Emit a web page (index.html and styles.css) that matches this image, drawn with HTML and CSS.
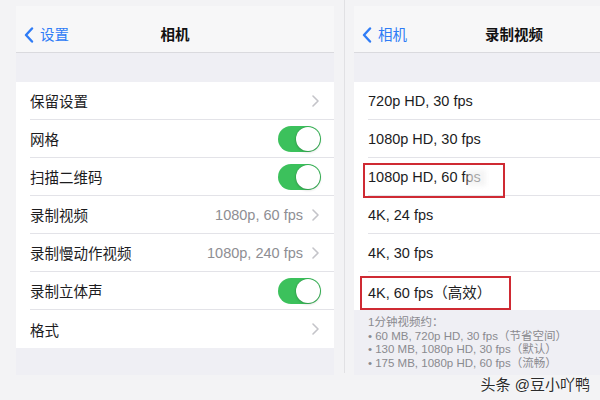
FILE: index.html
```html
<!DOCTYPE html>
<html lang="zh-CN">
<head>
    <meta charset="UTF-8">
    <title>相机 / 录制视频</title>
    <link rel="stylesheet" href="styles.css">
</head>
<body>
    <div class="stage">
        <!-- Left screen: camera settings -->
        <section class="phone">
            <header class="navbar">
                <span class="back">
                    <svg class="back-icon" width="10" height="16" viewBox="0 0 10 16"><polyline points="8,1.5 2,8 8,14.5" fill="none" stroke="#2f7cf6" stroke-width="2.4" stroke-linecap="round" stroke-linejoin="round"/></svg>
                    设置
                </span>
                <h1 class="title">相机</h1>
                <span></span>
            </header>
            <div class="gap"></div>
            <ul class="list">
                <li class="row">
                    <span class="label">保留设置</span>
                    <svg class="chev" width="7" height="12" viewBox="0 0 7 12"><polyline points="1,1 6,6 1,11" fill="none" stroke="#c4c4c9" stroke-width="1.6" stroke-linecap="round" stroke-linejoin="round"/></svg>
                </li>
                <li class="row">
                    <span class="label">网格</span>
                    <span class="toggle"><span class="knob"></span></span>
                </li>
                <li class="row">
                    <span class="label">扫描二维码</span>
                    <span class="toggle"><span class="knob"></span></span>
                </li>
                <li class="row">
                    <span class="label">录制视频</span>
                    <span class="value">1080p, 60 fps</span>
                    <svg class="chev" width="7" height="12" viewBox="0 0 7 12"><polyline points="1,1 6,6 1,11" fill="none" stroke="#c4c4c9" stroke-width="1.6" stroke-linecap="round" stroke-linejoin="round"/></svg>
                </li>
                <li class="row">
                    <span class="label">录制慢动作视频</span>
                    <span class="value">1080p, 240 fps</span>
                    <svg class="chev" width="7" height="12" viewBox="0 0 7 12"><polyline points="1,1 6,6 1,11" fill="none" stroke="#c4c4c9" stroke-width="1.6" stroke-linecap="round" stroke-linejoin="round"/></svg>
                </li>
                <li class="row">
                    <span class="label">录制立体声</span>
                    <span class="toggle"><span class="knob"></span></span>
                </li>
                <li class="row">
                    <span class="label">格式</span>
                    <svg class="chev" width="7" height="12" viewBox="0 0 7 12"><polyline points="1,1 6,6 1,11" fill="none" stroke="#c4c4c9" stroke-width="1.6" stroke-linecap="round" stroke-linejoin="round"/></svg>
                </li>
            </ul>
            <div class="footer footer-short"></div>
        </section>

        <div class="divider"></div>

        <!-- Right screen: record video (cut off by the frame) -->
        <section class="phone phone-cut">
            <header class="navbar navbar-cut">
                <span class="back">
                    <svg class="back-icon" width="10" height="16" viewBox="0 0 10 16"><polyline points="8,1.5 2,8 8,14.5" fill="none" stroke="#2f7cf6" stroke-width="2.4" stroke-linecap="round" stroke-linejoin="round"/></svg>
                    相机
                </span>
                <h1 class="title">录制视频</h1>
                <span></span>
            </header>
            <div class="gap"></div>
            <ul class="list">
                <li class="row"><span class="label">720p HD, 30 fps</span></li>
                <li class="row"><span class="label">1080p HD, 30 fps</span></li>
                <li class="row">
                    <span class="label">1080p HD, 60 fps</span>
                    <span class="smudge"></span>
                    <span class="mark mark-one"></span>
                </li>
                <li class="row"><span class="label">4K, 24 fps</span></li>
                <li class="row"><span class="label">4K, 30 fps</span></li>
                <li class="row">
                    <span class="label">4K, 60 fps（高效）</span>
                    <span class="mark mark-two"></span>
                </li>
            </ul>
            <div class="footer">
                <p>1分钟视频约：</p>
                <p>• 60 MB, 720p HD, 30 fps（节省空间）</p>
                <p>• 130 MB, 1080p HD, 30 fps（默认）</p>
                <p>• 175 MB, 1080p HD, 60 fps（流畅）</p>
            </div>
        </section>
    </div>

    <div class="watermark">头条 @豆小吖鸭</div>
</body>
</html>
```

FILE: styles.css
```css
* {
    box-sizing: border-box;
}
html, body {
    margin: 0;
    padding: 0;
}
body {
    width: 600px;
    height: 400px;
    overflow: hidden;
    position: relative;
    background-color: #f3f3f5; /* outer page grey */
    font-family: "Liberation Sans", "Noto Sans CJK SC", sans-serif;
    color: #1c1c1e;
}
.stage {
    display: flex;
    align-items: flex-start;
    width: 600px;
    padding-left: 16px;
    overflow: hidden;
}
.phone {
    width: 318px;
    flex: none;
    margin-top: 6px;
    background-color: #efeff4;
}
.phone-cut {
    width: 246px; /* screen continues past the right edge */
}
.divider {
    width: 1px;
    height: 373px;
    flex: none;
    margin: 0 9px 0 10px;
    background-color: #e1e1e4;
}
.navbar {
    height: 47px;
    display: grid;
    grid-template-columns: 1fr auto 1fr;
    align-items: end;
    padding: 0 8px 7px;
    background-color: #f7f7f8;
    border-bottom: 1px solid #dadade;
}
.navbar-cut {
    grid-template-columns: 123px auto 1fr;
}
.back {
    display: flex;
    align-items: center;
    gap: 6px;
    color: #2f7cf6;
    font-size: 14.5px;
    line-height: 20px;
}
.back-icon {
    flex: none;
}
.title {
    margin: 0;
    font-size: 14.5px;
    line-height: 20px;
    font-weight: bold;
    color: #111;
}
.gap {
    height: 29px;
}
.list {
    list-style: none;
    margin: 0;
    padding: 0;
    background-color: #ffffff;
}
.row {
    position: relative; /* anchor for the red annotation boxes */
    display: flex;
    align-items: center;
    height: 38px;
    margin-left: 14px;
    padding-right: 13px;
    border-bottom: 1px solid #e3e3e8;
    font-size: 14.5px;
}
.row:last-child {
    border-bottom: none;
}
.label {
    white-space: nowrap;
}
.value {
    margin-left: auto;
    color: #8e8e93;
}
.chev {
    margin-left: auto;
    margin-right: 2px;
    flex: none;
}
.value + .chev {
    margin-left: 9px;
}
.toggle {
    margin-left: auto;
    width: 43px;
    height: 26px;
    padding: 1px;
    border-radius: 13px;
    background-color: #3cc15c;
    display: flex;
    justify-content: flex-end;
}
.knob {
    width: 24px;
    height: 24px;
    border-radius: 50%;
    background-color: #ffffff;
    box-shadow: 0 0 0 0.5px rgba(40, 120, 60, 0.35), 0 1px 3px rgba(0, 0, 0, 0.2);
}
.footer {
    height: 65px;
    padding: 6px 0 0 14px;
    font-size: 11.5px;
    line-height: 13.5px;
    color: #8a8a8f;
}
.footer-short {
    height: 27px;
}
.footer p {
    margin: 0;
    white-space: nowrap;
}
/* red annotation frames drawn over the rows */
.mark {
    position: absolute;
    border: 2px solid #cf2a33;
}
.mark-one {
    left: -5px;
    top: 5px;
    width: 142px;
    height: 35px;
}
.mark-two {
    left: -8px;
    top: 4px;
    width: 151px;
    height: 34px;
}
.smudge {
    position: absolute;
    left: 100px;
    top: 12px;
    width: 18px;
    height: 16px;
    background-color: rgba(240, 240, 240, 0.65);
    filter: blur(2px);
}
.watermark {
    position: absolute;
    right: 10px;
    bottom: 6px;
    font-size: 15px;
    line-height: 18px;
    color: #2b2b2b;
    text-shadow: 0 0 2px #ffffff, 0 0 1px #ffffff;
    white-space: nowrap;
}
```
